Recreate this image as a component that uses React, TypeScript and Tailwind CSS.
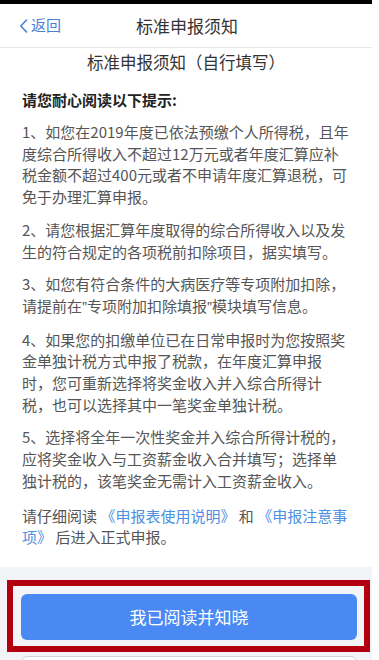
import React from "react";

const Q = ({ c }: { c: string }) => (
  <span style={{ fontFamily: '"Liberation Sans", sans-serif' }}>{c}</span>
);

export default function App() {
  const p = "mt-[11px] text-[15px] leading-[21.7px] text-[#555]";
  return (
    <div
      className="w-[379px] h-[660px] bg-white overflow-hidden"
      style={{ fontFamily: '"Noto Sans CJK SC", "Noto Sans", sans-serif' }}
    >
      <div className="w-[372px] flex flex-col">
        {/* status bar strip */}
        <div className="h-[4px] bg-black" />

        {/* Nav header */}
        <div className="h-[44px] grid grid-cols-[1fr_auto_1fr] items-center border-b border-[#e8e8e8]">
          <div className="flex items-center pl-[18px] text-[#4a7fd6] text-[15px]">
            <svg width="11" height="16" viewBox="0 0 11 16" fill="none" className="mr-[2px]">
              <path d="M8.5 2 L2.8 8 L8.5 14" stroke="#4a7fd6" strokeWidth="1.6" strokeLinecap="round" strokeLinejoin="round" />
            </svg>
            <span>返回</span>
          </div>
          <div className="text-[17px] text-[#333] pl-[2px]">标准申报须知</div>
          <div />
        </div>

        {/* Subtitle */}
        <div className="pt-[2px] text-center text-[16.5px] leading-[24px] text-[#333]">
          标准申报须知（自行填写）
        </div>

        {/* Body */}
        <div className="px-[22px]">
          <div className="mt-[15px] text-[15px] leading-[22px] font-bold text-[#222]">
            请您耐心阅读以下提示:
          </div>
          <p className="mt-[10px] text-[15px] leading-[21.7px] text-[#555]">
            1、如您在2019年度已依法预缴个人所得税，且年度综合所得收入不超过12万元或者年度汇算应补税金额不超过400元或者不申请年度汇算退税，可免于办理汇算申报。
          </p>
          <p className={p}>
            2、请您根据汇算年度取得的综合所得收入以及发生的符合规定的各项税前扣除项目，据实填写。
          </p>
          <p className={p}>
            3、如您有符合条件的大病医疗等专项附加扣除，请提前在<Q c={"\u201d"} />专项附加扣除填报<Q c={"\u201d"} />模块填写信息。
          </p>
          <p className={p}>
            4、如果您的扣缴单位已在日常申报时为您按照奖金单独计税方式申报了税款，在年度汇算申报时，您可重新选择将奖金收入并入综合所得计税，也可以选择其中一笔奖金单独计税。
          </p>
          <p className={p}>
            5、选择将全年一次性奖金并入综合所得计税的，应将奖金收入与工资薪金收入合并填写；选择单独计税的，该笔奖金无需计入工资薪金收入。
          </p>
          <p className="mt-[13px] text-[15px] leading-[21.7px] text-[#555]">
            请仔细阅读 <span className="text-[#4d8fe0]">《申报表使用说明》</span> 和 <span className="text-[#4d8fe0]">《申报注意事项》</span> 后进入正式申报。
          </p>
        </div>

        {/* Footer */}
        <div className="mt-[19px] bg-[#f3f4f8] pt-[27px] pb-[20px] h-[200px]">
          <div className="relative ml-[21px] w-[336px]">
            <button className="w-full h-[46px] rounded-[6px] bg-[#4a89f3] text-white text-[17px]">
              我已阅读并知晓
            </button>
            {/* annotation box */}
            <div className="absolute -left-[14px] -top-[14px] -right-[13px] -bottom-[12px] border-[6px] border-[#b3000f] pointer-events-none" />
          </div>
          <div className="ml-[21px] w-[336px] mt-[16px] h-[46px] rounded-[6px] border border-[#cfd3da] bg-white" />
        </div>
      </div>
    </div>
  );
}
